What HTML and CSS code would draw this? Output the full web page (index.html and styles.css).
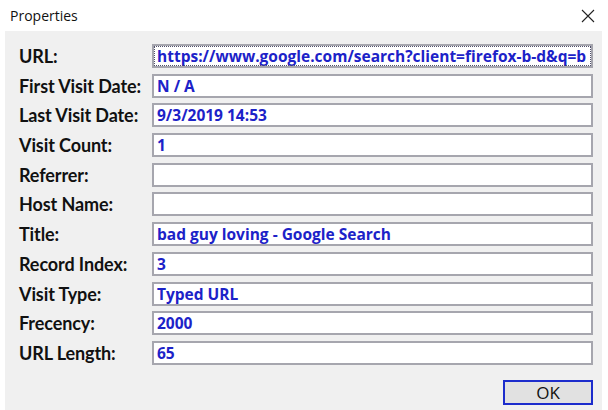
FILE: index.html
```html
<!DOCTYPE html>
<html>
<head>
<meta charset="utf-8">
<link rel="stylesheet" href="styles.css">
</head>
<body>
<div class="dialog">
  <div class="titlebar">
    <span class="title">Properties</span>
    <svg class="close" width="14" height="14" viewBox="0 0 14 14"><path d="M1 1 L13 13 M13 1 L1 13" stroke="#222" stroke-width="1.1" fill="none"/></svg>
  </div>
  <div class="panel">
    <div class="rows">
      <div class="row"><span class="label">URL:</span><div class="box focus">https://www.google.com/search?client=firefox-b-d&amp;q=b</div></div>
      <div class="row"><span class="label">First Visit Date:</span><div class="box">N / A</div></div>
      <div class="row"><span class="label">Last Visit Date:</span><div class="box">9/3/2019 14:53</div></div>
      <div class="row"><span class="label">Visit Count:</span><div class="box">1</div></div>
      <div class="row"><span class="label">Referrer:</span><div class="box"></div></div>
      <div class="row"><span class="label">Host Name:</span><div class="box"></div></div>
      <div class="row"><span class="label">Title:</span><div class="box">bad guy loving - Google Search</div></div>
      <div class="row"><span class="label">Record Index:</span><div class="box">3</div></div>
      <div class="row"><span class="label">Visit Type:</span><div class="box">Typed URL</div></div>
      <div class="row"><span class="label">Frecency:</span><div class="box">2000</div></div>
      <div class="row"><span class="label">URL Length:</span><div class="box">65</div></div>
    </div>
    <div class="actions">
      <button class="ok">OK</button>
    </div>
  </div>
</div>
</body>
</html>
```
FILE: styles.css
```css
html, body {
  margin: 0;
  padding: 0;
  background: #ffffff;
}
.dialog {
  width: 608px;
  height: 410px;
  display: flex;
  flex-direction: column;
  background: #ffffff;
}
.titlebar {
  height: 31px;
  display: flex;
  align-items: center;
  justify-content: space-between;
  padding: 0 13px 0 10px;
  box-sizing: border-box;
}
.title {
  font-family: "Open Sans", "Noto Sans", sans-serif;
  font-size: 14px;
  color: #111;
  margin-top: -1px;
}
.close {
  margin-top: 0;
}
.panel {
  flex: 1;
  margin: 0 6px 0 5px;
  background: #f0f0f0;
  display: flex;
  flex-direction: column;
  padding: 13px 9px 0 14px;
}
.rows {
  display: flex;
  flex-direction: column;
  gap: 5.7px;
}
.row {
  display: flex;
  align-items: center;
  height: 24px;
}
.label {
  width: 133px;
  font-family: Lato, "Open Sans", sans-serif;
  font-weight: bold;
  font-size: 18px;
  color: #111;
  letter-spacing: -0.1px;
}
.box {
  flex: 1;
  height: 24px;
  box-sizing: border-box;
  border: 2px solid #a6a6ae;
  background: #fff;
  padding: 0 0 0 3px;
  display: flex;
  align-items: center;
  font-family: "Open Sans", sans-serif;
  font-weight: bold;
  font-size: 15.5px;
  color: #1c22c8;
  white-space: nowrap;
  overflow: hidden;
}
.box.focus {
  outline: 1px dotted #50506a;
  outline-offset: -3px;
}
.actions {
  display: flex;
  justify-content: flex-end;
  margin-top: 15px;
}
.ok {
  width: 90px;
  height: 25px;
  box-sizing: border-box;
  border: 2px solid #1c2ccc;
  background: #e1e1e1;
  font-family: "Open Sans", sans-serif;
  font-size: 17px;
  color: #111;
  padding: 0;
  border-radius: 0;
  line-height: 1;
}
```
